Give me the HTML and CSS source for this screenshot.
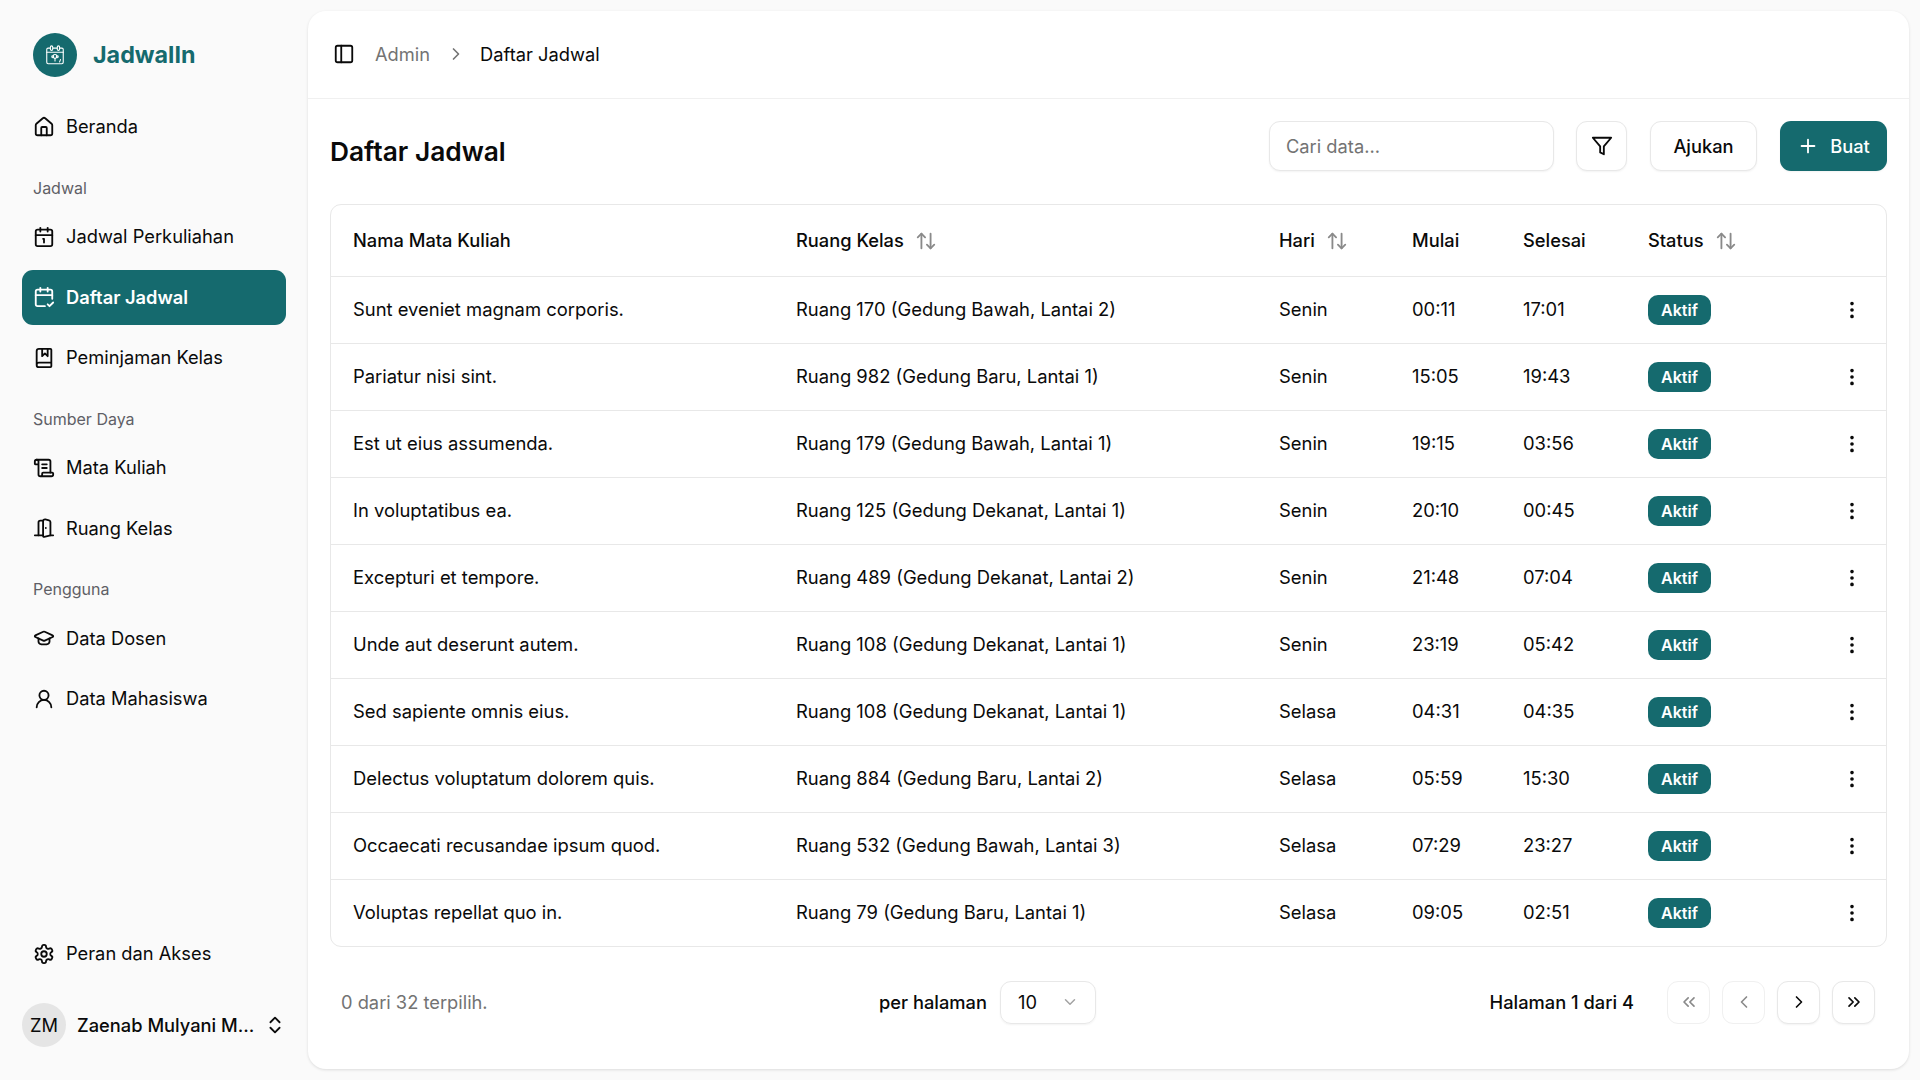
FILE: index.html
```html
<!DOCTYPE html>
<html lang="id">
  <head>
    <meta charset="UTF-8" />
    <title>Daftar Jadwal</title>
    <link rel="stylesheet" href="styles.css">
  </head>
  <body>
    <svg class="sprite" xmlns="http://www.w3.org/2000/svg">
      <symbol id="i-house" viewBox="0 0 24 24"><path d="M15 21v-8a1 1 0 0 0-1-1h-4a1 1 0 0 0-1 1v8"/><path d="M3 10a2 2 0 0 1 .709-1.528l7-5.999a2 2 0 0 1 2.582 0l7 5.999A2 2 0 0 1 21 10v9a2 2 0 0 1-2 2H5a2 2 0 0 1-2-2z"/></symbol>
      <symbol id="i-cal-1" viewBox="0 0 24 24"><path d="M11 14h1v4"/><path d="M16 2v4"/><path d="M3 10h18"/><path d="M8 2v4"/><rect x="3" y="4" width="18" height="18" rx="2"/></symbol>
      <symbol id="i-cal-check" viewBox="0 0 24 24"><path d="M8 2v4"/><path d="M16 2v4"/><path d="M21 14V6a2 2 0 0 0-2-2H5a2 2 0 0 0-2 2v14a2 2 0 0 0 2 2h8"/><path d="M3 10h18"/><path d="m16 20 2 2 4-4"/></symbol>
      <symbol id="i-book" viewBox="0 0 24 24"><path d="M10 2v8l3-3 3 3V2"/><path d="M4 19.5v-15A2.5 2.5 0 0 1 6.5 2H19a1 1 0 0 1 1 1v18a1 1 0 0 1-1 1H6.5a1 1 0 0 1 0-5H20"/></symbol>
      <symbol id="i-scroll" viewBox="0 0 24 24"><path d="M15 12h-5"/><path d="M15 8h-5"/><path d="M19 17V5a2 2 0 0 0-2-2H4"/><path d="M8 21h12a2 2 0 0 0 2-2v-1a1 1 0 0 0-1-1H11a1 1 0 0 0-1 1v1a2 2 0 1 1-4 0V5a2 2 0 1 0-4 0v2a1 1 0 0 0 1 1h3"/></symbol>
      <symbol id="i-door" viewBox="0 0 24 24"><path d="M11 20H2"/><path d="M11 4.562v16.157a1 1 0 0 0 1.242.97L19 20V5.562a2 2 0 0 0-1.515-1.94l-4-1A2 2 0 0 0 11 4.561z"/><path d="M11 4H8a2 2 0 0 0-2 2v14"/><path d="M14 12h.01"/><path d="M22 20h-3"/></symbol>
      <symbol id="i-cap" viewBox="0 0 24 24"><path d="M21.42 10.922a1 1 0 0 0-.019-1.838L12.83 5.18a2 2 0 0 0-1.66 0L2.6 9.08a1 1 0 0 0 0 1.832l8.57 3.908a2 2 0 0 0 1.66 0z"/><path d="M6 12.5V16a6 3 0 0 0 12 0v-3.5"/></symbol>
      <symbol id="i-user" viewBox="0 0 24 24"><circle cx="12" cy="8" r="5"/><path d="M20 21a8 8 0 0 0-16 0"/></symbol>
      <symbol id="i-gear" viewBox="0 0 24 24"><path d="M12.22 2h-.44a2 2 0 0 0-2 2v.18a2 2 0 0 1-1 1.73l-.43.25a2 2 0 0 1-2 0l-.15-.08a2 2 0 0 0-2.73.73l-.22.38a2 2 0 0 0 .73 2.73l.15.1a2 2 0 0 1 1 1.72v.51a2 2 0 0 1-1 1.74l-.15.09a2 2 0 0 0-.73 2.73l.22.38a2 2 0 0 0 2.73.73l.15-.08a2 2 0 0 1 2 0l.43.25a2 2 0 0 1 1 1.73V20a2 2 0 0 0 2 2h.44a2 2 0 0 0 2-2v-.18a2 2 0 0 1 1-1.73l.43-.25a2 2 0 0 1 2 0l.15.08a2 2 0 0 0 2.73-.73l.22-.39a2 2 0 0 0-.73-2.73l-.15-.08a2 2 0 0 1-1-1.74v-.5a2 2 0 0 1 1-1.74l.15-.09a2 2 0 0 0 .73-2.73l-.22-.38a2 2 0 0 0-2.73-.73l-.15.08a2 2 0 0 1-2 0l-.43-.25a2 2 0 0 1-1-1.73V4a2 2 0 0 0-2-2z"/><circle cx="12" cy="12" r="3"/></symbol>
      <symbol id="i-updown" viewBox="0 0 24 24"><path d="m7 15 5 5 5-5"/><path d="m7 9 5-5 5 5"/></symbol>
      <symbol id="i-panel" viewBox="0 0 24 24"><rect x="3" y="3" width="18" height="18" rx="2"/><path d="M9 3v18"/></symbol>
      <symbol id="i-right" viewBox="0 0 24 24"><path d="m9 18 6-6-6-6"/></symbol>
      <symbol id="i-left" viewBox="0 0 24 24"><path d="m15 18-6-6 6-6"/></symbol>
      <symbol id="i-dbl-right" viewBox="0 0 24 24"><path d="m6 17 5-5-5-5"/><path d="m13 17 5-5-5-5"/></symbol>
      <symbol id="i-dbl-left" viewBox="0 0 24 24"><path d="m11 17-5-5 5-5"/><path d="m18 17-5-5 5-5"/></symbol>
      <symbol id="i-down" viewBox="0 0 24 24"><path d="m6 9 6 6 6-6"/></symbol>
      <symbol id="i-funnel" viewBox="0 0 24 24"><polygon points="22 3 2 3 10 12.46 10 19 14 21 14 12.46 22 3"/></symbol>
      <symbol id="i-plus" viewBox="0 0 24 24"><path d="M5 12h14"/><path d="M12 5v14"/></symbol>
      <symbol id="i-sort" viewBox="0 0 24 24"><path d="m21 16-4 4-4-4"/><path d="M17 20V4"/><path d="m3 8 4-4 4 4"/><path d="M7 4v16"/></symbol>
      <symbol id="i-dots" viewBox="0 0 24 24"><circle cx="12" cy="12" r="1"/><circle cx="12" cy="5" r="1"/><circle cx="12" cy="19" r="1"/></symbol>
    </svg>

    <div class="app">
      <aside class="sidebar">
        <div class="brand">
          <span class="brand-logo">
            <svg class="icon" viewBox="0 0 24 24">
              <path d="M6.5 4.5H4.5a1.5 1.5 0 0 0-1.5 1.5v14a1.5 1.5 0 0 0 1.5 1.5h15a1.5 1.5 0 0 0 1.5-1.5V6a1.5 1.5 0 0 0-1.5-1.5h-2"/>
              <path d="M10 4.500h4"/>
              <path d="M3 9h18"/>
              <rect x="7" y="2" width="2.500" height="5" rx="1.250"/>
              <rect x="14.500" y="2" width="2.500" height="5" rx="1.250"/>
              <circle cx="12" cy="13.500" r="2"/>
              <circle cx="9.500" cy="14" r="1"/>
              <circle cx="14.500" cy="14" r="1"/>
              <path d="M12 15.500v3"/>
              <path d="M18 17l-1 2.500"/>
            </svg>
          </span>
          <span class="brand-name">JadwalIn</span>
        </div>

        <nav class="nav">
          <a class="nav-item"><svg class="icon"><use href="#i-house"/></svg>Beranda</a>

          <div class="nav-label">Jadwal</div>
          <a class="nav-item"><svg class="icon"><use href="#i-cal-1"/></svg>Jadwal Perkuliahan</a>
          <a class="nav-item active"><svg class="icon"><use href="#i-cal-check"/></svg>Daftar Jadwal</a>
          <a class="nav-item"><svg class="icon"><use href="#i-book"/></svg>Peminjaman Kelas</a>

          <div class="nav-label">Sumber Daya</div>
          <a class="nav-item"><svg class="icon"><use href="#i-scroll"/></svg>Mata Kuliah</a>
          <a class="nav-item"><svg class="icon"><use href="#i-door"/></svg>Ruang Kelas</a>

          <div class="nav-label">Pengguna</div>
          <a class="nav-item"><svg class="icon"><use href="#i-cap"/></svg>Data Dosen</a>
          <a class="nav-item"><svg class="icon"><use href="#i-user"/></svg>Data Mahasiswa</a>
        </nav>

        <div class="sidebar-bottom">
          <a class="nav-item"><svg class="icon"><use href="#i-gear"/></svg>Peran dan Akses</a>
          <div class="user">
            <span class="avatar">ZM</span>
            <span class="user-name">Zaenab Mulyani M...</span>
            <svg class="icon"><use href="#i-updown"/></svg>
          </div>
        </div>
      </aside>

      <main class="main">
        <header class="topbar">
          <svg class="icon"><use href="#i-panel"/></svg>
          <span class="crumb-muted">Admin</span>
          <svg class="icon crumb-sep"><use href="#i-right"/></svg>
          <span>Daftar Jadwal</span>
        </header>

        <div class="content">
          <div class="page-head">
            <h1>Daftar Jadwal</h1>
            <div class="toolbar">
              <input class="search" type="text" placeholder="Cari data..." />
              <button class="btn btn-icon"><svg class="icon"><use href="#i-funnel"/></svg></button>
              <button class="btn btn-outline">Ajukan</button>
              <button class="btn btn-primary"><svg class="icon"><use href="#i-plus"/></svg>Buat</button>
            </div>
          </div>

          <div class="table-wrap">
            <table class="table">
              <colgroup>
                <col class="c-name" /><col class="c-room" /><col class="c-day" /><col class="c-start" /><col class="c-end" /><col class="c-status" /><col class="c-act" />
              </colgroup>
              <thead>
                <tr>
                  <th>Nama Mata Kuliah</th>
                  <th>Ruang Kelas<svg class="icon sort"><use href="#i-sort"/></svg></th>
                  <th>Hari<svg class="icon sort"><use href="#i-sort"/></svg></th>
                  <th>Mulai</th>
                  <th>Selesai</th>
                  <th>Status<svg class="icon sort"><use href="#i-sort"/></svg></th>
                  <th></th>
                </tr>
              </thead>
              <tbody>
                <tr><td>Sunt eveniet magnam corporis.</td><td>Ruang 170 (Gedung Bawah, Lantai 2)</td><td>Senin</td><td>00:11</td><td>17:01</td><td><span class="badge">Aktif</span></td><td class="act"><svg class="icon"><use href="#i-dots"/></svg></td></tr>
                <tr><td>Pariatur nisi sint.</td><td>Ruang 982 (Gedung Baru, Lantai 1)</td><td>Senin</td><td>15:05</td><td>19:43</td><td><span class="badge">Aktif</span></td><td class="act"><svg class="icon"><use href="#i-dots"/></svg></td></tr>
                <tr><td>Est ut eius assumenda.</td><td>Ruang 179 (Gedung Bawah, Lantai 1)</td><td>Senin</td><td>19:15</td><td>03:56</td><td><span class="badge">Aktif</span></td><td class="act"><svg class="icon"><use href="#i-dots"/></svg></td></tr>
                <tr><td>In voluptatibus ea.</td><td>Ruang 125 (Gedung Dekanat, Lantai 1)</td><td>Senin</td><td>20:10</td><td>00:45</td><td><span class="badge">Aktif</span></td><td class="act"><svg class="icon"><use href="#i-dots"/></svg></td></tr>
                <tr><td>Excepturi et tempore.</td><td>Ruang 489 (Gedung Dekanat, Lantai 2)</td><td>Senin</td><td>21:48</td><td>07:04</td><td><span class="badge">Aktif</span></td><td class="act"><svg class="icon"><use href="#i-dots"/></svg></td></tr>
                <tr><td>Unde aut deserunt autem.</td><td>Ruang 108 (Gedung Dekanat, Lantai 1)</td><td>Senin</td><td>23:19</td><td>05:42</td><td><span class="badge">Aktif</span></td><td class="act"><svg class="icon"><use href="#i-dots"/></svg></td></tr>
                <tr><td>Sed sapiente omnis eius.</td><td>Ruang 108 (Gedung Dekanat, Lantai 1)</td><td>Selasa</td><td>04:31</td><td>04:35</td><td><span class="badge">Aktif</span></td><td class="act"><svg class="icon"><use href="#i-dots"/></svg></td></tr>
                <tr><td>Delectus voluptatum dolorem quis.</td><td>Ruang 884 (Gedung Baru, Lantai 2)</td><td>Selasa</td><td>05:59</td><td>15:30</td><td><span class="badge">Aktif</span></td><td class="act"><svg class="icon"><use href="#i-dots"/></svg></td></tr>
                <tr><td>Occaecati recusandae ipsum quod.</td><td>Ruang 532 (Gedung Bawah, Lantai 3)</td><td>Selasa</td><td>07:29</td><td>23:27</td><td><span class="badge">Aktif</span></td><td class="act"><svg class="icon"><use href="#i-dots"/></svg></td></tr>
                <tr><td>Voluptas repellat quo in.</td><td>Ruang 79 (Gedung Baru, Lantai 1)</td><td>Selasa</td><td>09:05</td><td>02:51</td><td><span class="badge">Aktif</span></td><td class="act"><svg class="icon"><use href="#i-dots"/></svg></td></tr>
              </tbody>
            </table>
          </div>

          <div class="table-foot">
            <span class="selected">0 dari 32 terpilih.</span>
            <div class="per-page">
              <span>per halaman</span>
              <div class="select">10<svg class="icon"><use href="#i-down"/></svg></div>
            </div>
            <div class="pager">
              <span class="page-info">Halaman 1 dari 4</span>
              <div class="pager-btns">
                <button class="btn page-btn" disabled><svg class="icon"><use href="#i-dbl-left"/></svg></button>
                <button class="btn page-btn" disabled><svg class="icon"><use href="#i-left"/></svg></button>
                <button class="btn page-btn"><svg class="icon"><use href="#i-right"/></svg></button>
                <button class="btn page-btn"><svg class="icon"><use href="#i-dbl-right"/></svg></button>
              </div>
            </div>
          </div>
        </div>
      </main>
    </div>
  </body>
</html>
```

FILE: styles.css
```css
* {
  box-sizing: border-box;
}
html,
body {
  height: 100%;
}
body {
  margin: 0;
  background-color: #fafafa;
  color: #0a0a0a;
  font-family: "Inter", "Noto Sans", sans-serif;
  font-size: 18.3px;
  overflow: hidden;
}
.sprite {
  display: none;
}
.icon {
  width: 22px;
  height: 22px;
  flex-shrink: 0;
  fill: none;
  stroke: currentColor;
  stroke-width: 2;
  stroke-linecap: round;
  stroke-linejoin: round;
}
.app {
  display: flex;
  height: 1080px;
}

/* sidebar */
.sidebar {
  display: flex;
  flex-direction: column;
  width: 308px;
  flex-shrink: 0;
  padding: 33px 22px 33px;
}
.brand {
  display: flex;
  align-items: center;
  gap: 16px;
  padding-left: 11px;
  margin-bottom: 22px;
}
.brand-logo {
  display: flex;
  align-items: center;
  justify-content: center;
  width: 44px;
  height: 44px;
  border-radius: 50%;
  background-color: #156a6e;
  color: #fff;
}
.brand-logo .icon {
  stroke-width: 1.2;
}
.brand-name {
  margin-bottom: 2px;
  color: #156a6e;
  font-size: 23.3px;
  font-weight: 700;
}
.nav {
  display: flex;
  flex-direction: column;
  flex: 1;
}
.nav-item {
  display: flex;
  align-items: center;
  gap: 11px;
  height: 55px;
  margin-bottom: 5.5px;
  padding: 0 0 1px 11px;
  border-radius: 11px;
}
.nav-item .icon {
  margin-top: 1px;
}
.nav-item.active {
  background-color: #156a6e;
  color: #fff;
  font-weight: 600;
}
.nav-label {
  display: flex;
  align-items: center;
  height: 22px;
  margin: 17px 0 10.5px 11px;
  color: #5f5f66;
  font-size: 16px;
}
.sidebar-bottom .nav-item {
  margin-bottom: 0;
}
.user {
  display: flex;
  align-items: center;
  gap: 11px;
  margin-top: 22px;
  height: 44px;
}
.avatar {
  display: flex;
  align-items: center;
  justify-content: center;
  width: 44px;
  height: 44px;
  flex-shrink: 0;
  border-radius: 50%;
  background-color: #e5e5e5;
}
.user-name {
  flex: 1;
  min-width: 0;
  font-weight: 500;
  white-space: nowrap;
}

/* main card */
.main {
  flex: 1;
  display: flex;
  flex-direction: column;
  margin: 11px 11px 11px 0;
  background: white;
  border-radius: 18px;
  box-shadow: 0 1px 3px rgba(0, 0, 0, 0.12);
}
.topbar {
  display: flex;
  align-items: center;
  height: 88px;
  padding: 0 25px 1px;
  border-bottom: 1px solid #f0f0f0;
}
.crumb-muted {
  margin-left: 20px;
  color: #737373;
}
.crumb-sep {
  margin: 0 14px 0 16px;
  width: 20px;
  height: 20px;
  color: #737373;
}
.content {
  flex: 1;
  display: flex;
  flex-direction: column;
  padding: 22px 22px 0;
}
.page-head {
  display: flex;
  align-items: center;
  justify-content: space-between;
  height: 50px;
  margin-bottom: 33px;
}
h1 {
  margin: 11px 0 0;
  font-size: 26.3px;
  font-weight: 600;
}
.toolbar {
  display: flex;
  gap: 23px;
}
.search {
  width: 285px;
  height: 50px;
  margin-right: -1px;
  padding: 0 16px;
  border: 1px solid #e8e8e8;
  border-radius: 11px;
  box-shadow: 0 1px 2px rgba(0, 0, 0, 0.05);
  font: inherit;
  outline: none;
}
.search::placeholder {
  color: #737373;
}
.btn {
  display: flex;
  align-items: center;
  justify-content: center;
  gap: 11px;
  height: 50px;
  padding: 0;
  border: 1px solid #e8e8e8;
  border-radius: 11px;
  background: white;
  box-shadow: 0 1px 2px rgba(0, 0, 0, 0.05);
  color: inherit;
  font: inherit;
  font-weight: 500;
}
.btn-icon {
  width: 51px;
}
.btn-outline {
  width: 107px;
}
.btn-primary {
  width: 107px;
  border: none;
  background-color: #156a6e;
  color: #fff;
}

/* table */
.table-wrap {
  border: 1px solid #e8e8e8;
  border-radius: 11px;
  overflow: hidden;
}
.table {
  width: 100%;
  border-collapse: collapse;
  table-layout: fixed;
}
.c-name { width: 443px; }
.c-room { width: 483px; }
.c-day { width: 133px; }
.c-start { width: 111px; }
.c-end { width: 125px; }
.c-act { width: 68px; }
th,
td {
  padding: 0 0 0 22px;
  text-align: left;
  white-space: nowrap;
}
th {
  height: 71px;
  font-weight: 500;
  border-bottom: 1px solid #e8e8e8;
}
td {
  height: 67px;
  padding-bottom: 1px;
  font-size: 18.4px;
  border-bottom: 1px solid #e8e8e8;
}
tbody tr:last-child td {
  border-bottom: none;
}
.sort {
  margin-left: 11px;
  vertical-align: -5px;
  color: #8a8a8a;
}
.badge {
  display: inline-block;
  width: 63px;
  height: 30px;
  margin-top: 2px;
  border-radius: 10px;
  background-color: #156a6e;
  color: #fff;
  font-size: 16px;
  font-weight: 600;
  line-height: 30px;
  text-align: center;
  vertical-align: middle;
}
.act {
  padding: 1px 0 0 23px;
}
.act .icon {
  display: block;
}

/* footer */
.table-foot {
  display: flex;
  align-items: center;
  height: 110px;
  padding: 0 12px 1px 11px;
}
.selected {
  width: 538px;
  color: #737373;
}
.per-page {
  display: flex;
  align-items: center;
  gap: 13px;
  font-weight: 500;
}
.select {
  display: flex;
  align-items: center;
  justify-content: space-between;
  width: 96px;
  height: 43px;
  margin-top: 1px;
  padding: 0 16px 0 17px;
  border: 1px solid #e8e8e8;
  border-radius: 11px;
  box-shadow: 0 1px 2px rgba(0, 0, 0, 0.05);
  font-weight: 400;
}
.select .icon {
  width: 18px;
  height: 18px;
  color: #a3a3a3;
}
.pager {
  display: flex;
  align-items: center;
  margin-left: auto;
  gap: 33px;
}
.page-info {
  font-weight: 500;
}
.pager-btns {
  display: flex;
  gap: 12px;
  margin-top: 1px;
}
.page-btn {
  width: 43px;
  height: 43px;
}
.page-btn .icon {
  width: 20px;
  height: 20px;
}
.page-btn:disabled {
  color: #8a8a8a;
  box-shadow: none;
  border-color: #f0f0f0;
}
```
